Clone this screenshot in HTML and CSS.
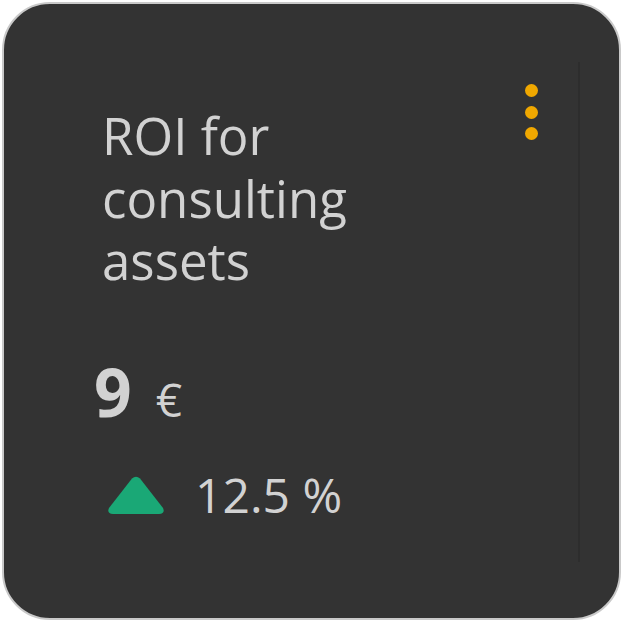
FILE: index.html
```
<!DOCTYPE html>
<html>
<head>
<meta charset="utf-8">
<link rel="stylesheet" href="styles.css">
</head>
<body>
<div class="card">
  <div class="inner">
    <div class="header">
      <h1 class="title">ROI for consulting assets</h1>
      <div class="menu"><span class="dot"></span><span class="dot"></span><span class="dot"></span></div>
    </div>
    <div class="value"><span class="num">9</span><span class="unit">€</span></div>
    <div class="trend">
      <svg class="arrow" width="60" height="40" viewBox="0 0 60 40"><path d="M26 3.5 Q30 0 34 3.5 L57 33 Q59.5 39 53 39 L7 39 Q0.5 39 3 33 Z" fill="#1aa876"/></svg>
      <span class="pct">12.5 %</span>
    </div>
  </div>
</div>
</body>
</html>
```
FILE: styles.css
```
html, body { margin: 0; padding: 0; background: #ffffff; }
body { width: 623px; height: 622px; }
.card {
  box-sizing: border-box;
  margin: 2px;
  width: 619px;
  height: 618px;
  background: #333333;
  border: 2px solid #c9c9c9;
  border-radius: 48px;
  padding: 58px 39px 0 0;
  font-family: "Open Sans", "Noto Sans", sans-serif;
  color: #d2d2d2;
}
.inner {
  box-sizing: border-box;
  height: 500px;
  border-right: 2px solid #2d2d2d;
  padding: 24px 0 0 98px;
}
.header { display: flex; justify-content: space-between; align-items: flex-start; }
.title {
  margin: 18px 0 0 0;
  width: 330px;
  font-weight: 400;
  font-size: 51px;
  line-height: 62.5px;
  color: #d2d2d2;
}
.menu { display: flex; flex-direction: column; gap: 8.5px; margin: -2px 40px 0 0; }
.dot { width: 13px; height: 13px; border-radius: 50%; background: #f0a800; }
.value { margin-top: 64px; display: flex; align-items: baseline; margin-left: -8px; height: 70px; }
.num { font-size: 66px; font-weight: 700; line-height: 70px; }
.unit { font-size: 46px; margin-left: 24px; }
.trend { display: flex; align-items: center; margin-top: 44px; margin-left: 4px; }
.arrow { display: block; }
.pct { font-size: 48px; margin-left: 29px; line-height: 50px; }
```
